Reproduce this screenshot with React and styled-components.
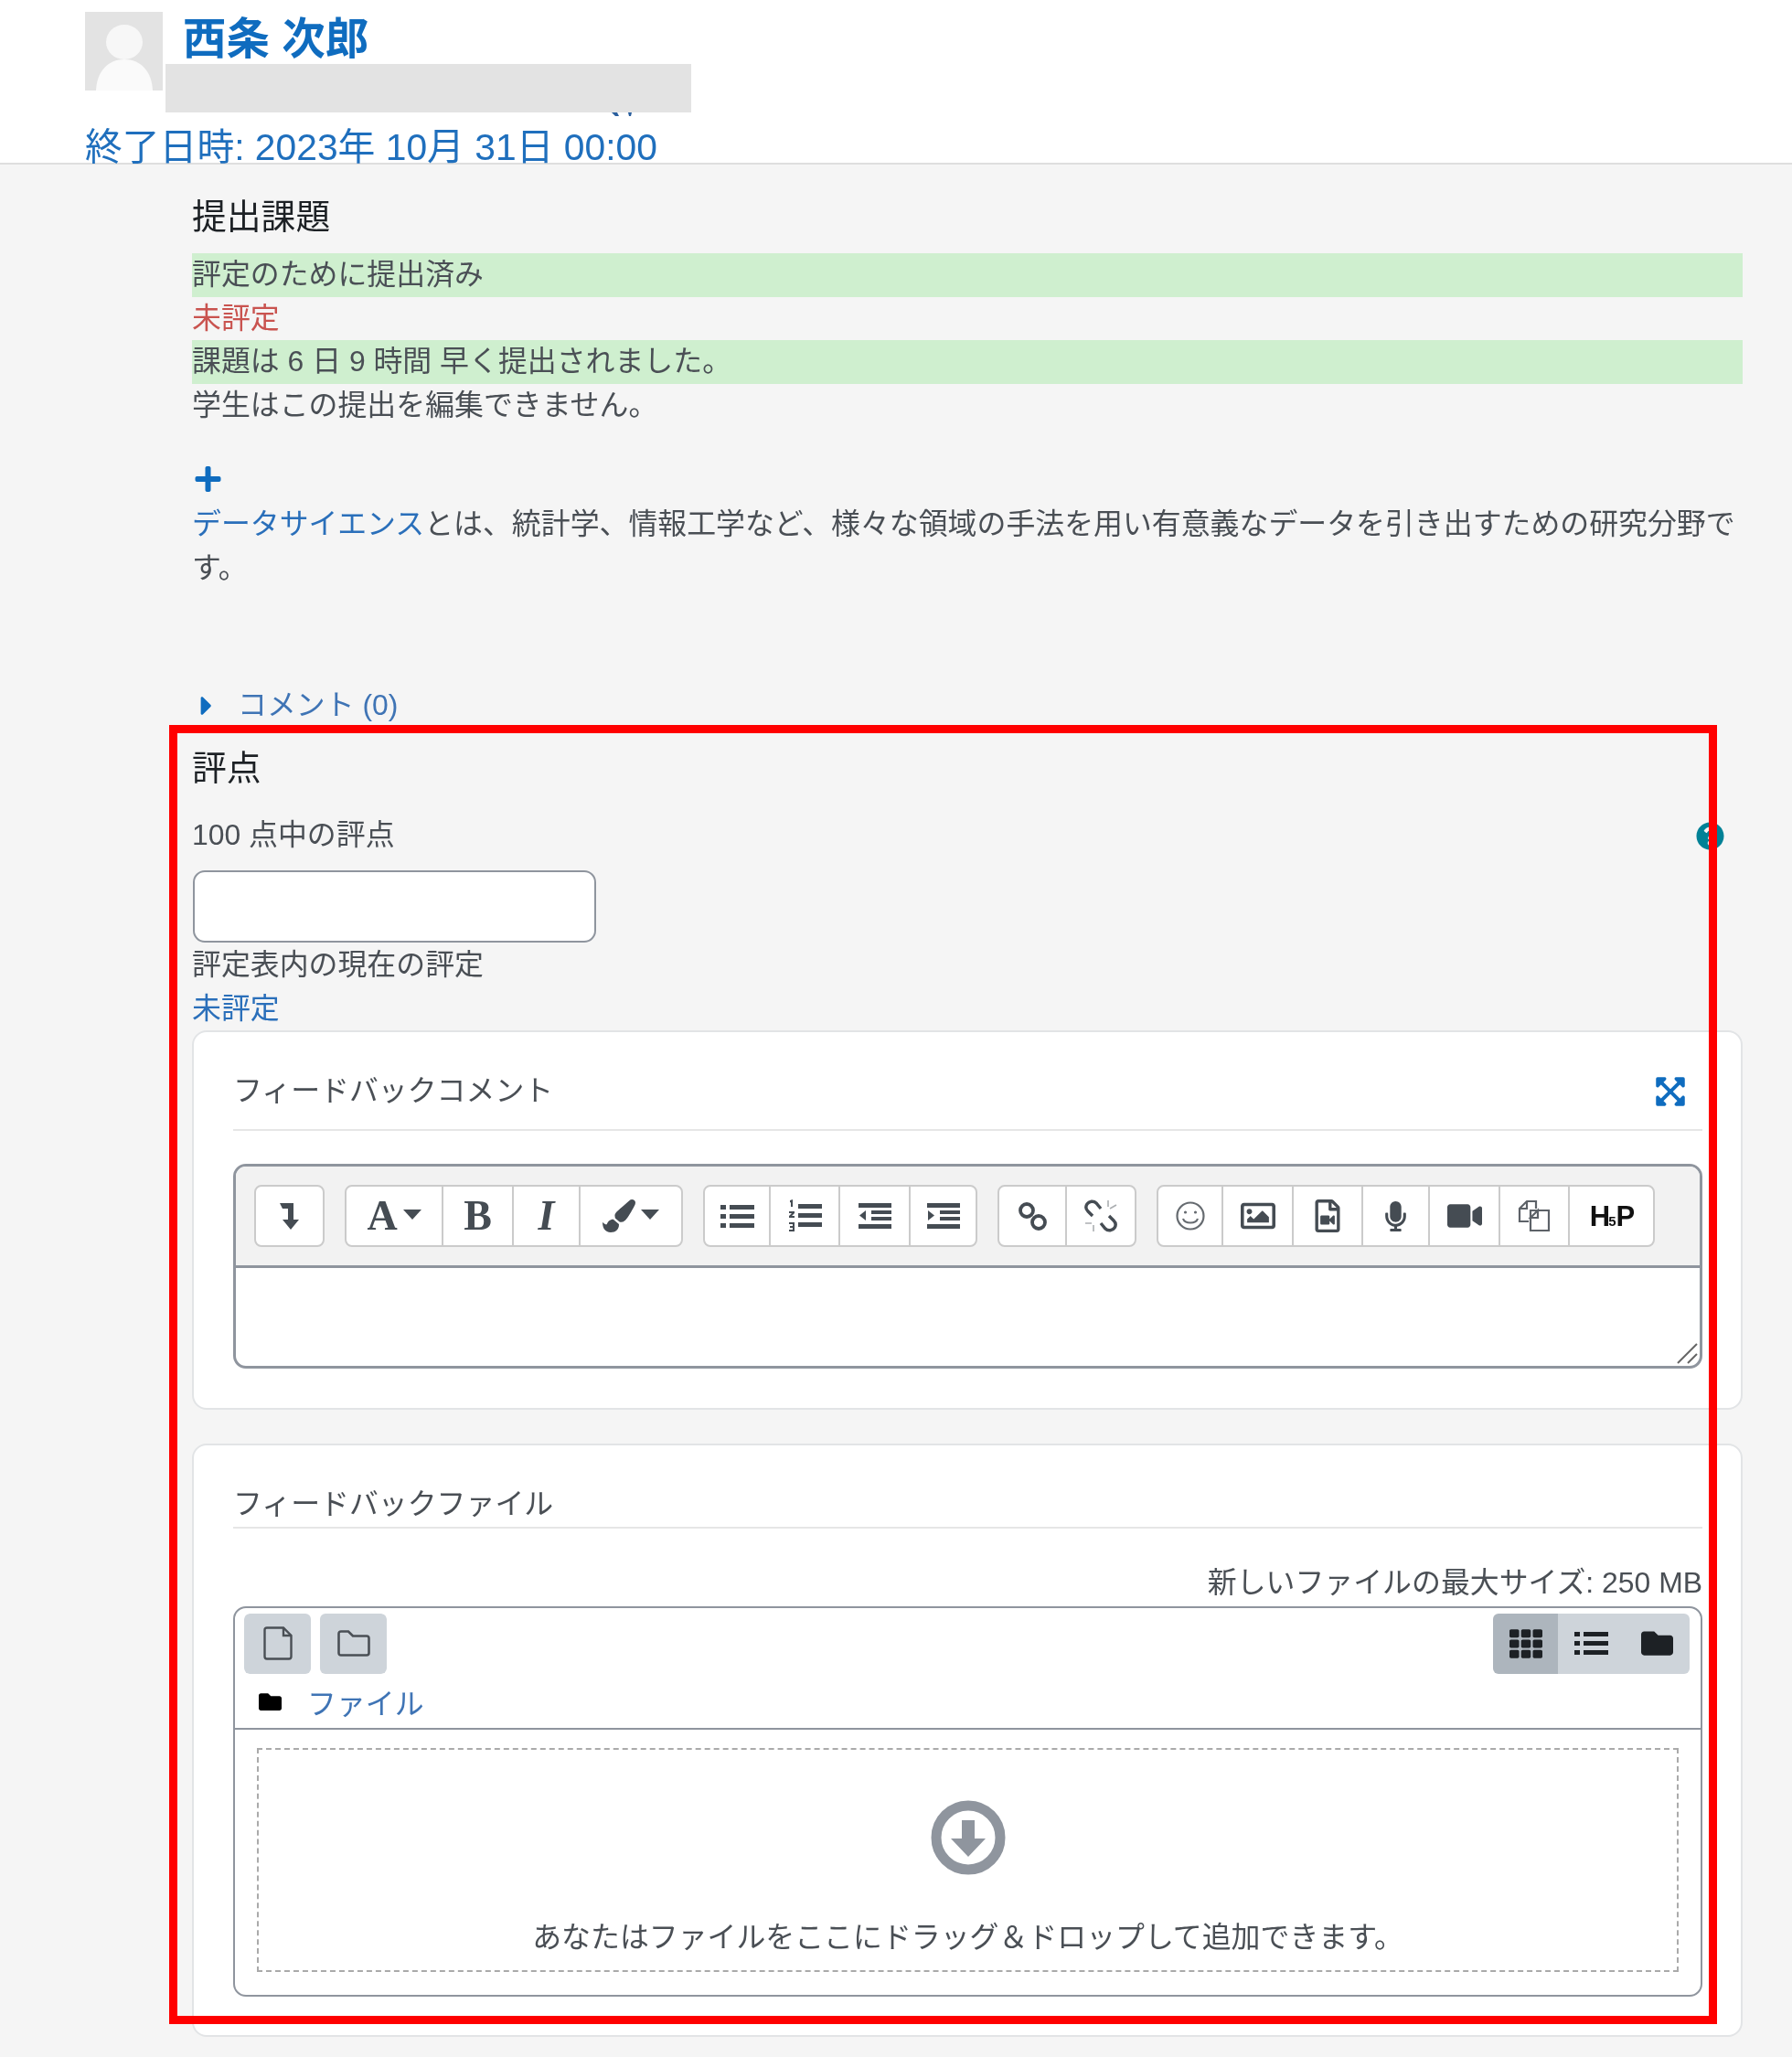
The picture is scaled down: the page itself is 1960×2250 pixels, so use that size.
import styled, { createGlobalStyle } from "styled-components";
import {
  FaPaintBrush,
  FaRegImage,
  FaRegFileVideo,
  FaMicrophone,
  FaVideo,
  FaTh,
  FaFolder,
  FaPlus,
  FaCaretRight,
  FaExpandArrowsAlt,
  FaQuestionCircle,
} from "react-icons/fa";

const GlobalStyle = createGlobalStyle`
  html, body {
    margin: 0;
    background: #f5f5f5;
  }
  body {
    font-family: "Liberation Sans", "Noto Sans CJK JP", sans-serif;
    font-size: 31.9px;
    line-height: 47.5px;
    color: #4a4f55;
  }
  * {
    box-sizing: border-box;
  }
`;

const Page = styled.div`
  position: relative;
  width: 1960px;
  height: 2250px;
  overflow: hidden;
`;

const Soft = styled.div`
  filter: blur(0.7px);
`;

// the red rectangle drawn over the screenshot
const RedFrame = styled.div`
  position: absolute;
  left: 185px;
  top: 793px;
  width: 1693px;
  height: 1421px;
  border: 9px solid #ff0000;
  pointer-events: none;
`;

const Header = styled.header`
  height: 180px;
  padding: 13px 0 0 93px;
  background: #fff;
  border-bottom: 2px solid #dedede;
`;

const UserRow = styled.div`
  display: flex;
  height: 114px;
`;

const Avatar = styled.svg`
  width: 85px;
  height: 86px;
  flex: none;
`;

const UserInfo = styled.div`
  margin-left: 3px;
`;

const UserName = styled.div`
  height: 57px;
  margin-left: 19px;
  padding-top: 7px;
  font-size: 47.5px;
  line-height: 46px;
  font-weight: 700;
  color: #0f6cbf;
`;

const Redacted = styled.div`
  width: 575px;
  height: 53px;
  background: #e3e3e3;
`;

const Clipped = styled.svg`
  display: block;
  margin-left: 486px;
  width: 26px;
  height: 4px;
`;

const DueDate = styled.div`
  margin-top: 14px;
  font-size: 40.8px;
  line-height: 40px;
  color: #1f6fbd;
`;

const Main = styled.main`
  padding: 35px 54px 0 210px;
`;

const Heading = styled.h3`
  margin: ${(p) => p.$margin};
  font-size: 37.8px;
  line-height: 45px;
  font-weight: 400;
  color: #1d2125;
`;

const StatusRow = styled.div`
  height: 47.5px;
  background: ${(p) => (p.$ok ? "#cfefcf" : "transparent")};
  color: ${(p) => p.$color || "inherit"};
`;

const PlusIcon = styled(FaPlus)`
  display: block;
  width: 29px;
  height: 32px;
  margin: 41px 0 10px 3px;
  color: #0f6cbf;
`;

const Paragraph = styled.p`
  margin: 0;
`;

const Link = styled.span`
  color: #2a6fba;
`;

const CommentRow = styled.div`
  display: flex;
  align-items: center;
  height: 47.5px;
  margin-top: 103px;
  color: #3f74b5;
`;

const CommentCaret = styled(FaCaretRight)`
  width: 14px;
  height: 34px;
  margin: 0 27px 0 9px;
  color: #0f6cbf;
`;

const HelpIcon = styled(FaQuestionCircle)`
  position: absolute;
  left: 1855px;
  top: 899px;
  width: 31px;
  height: 31px;
  color: #008196;
`;

const GradeInput = styled.div`
  width: 441px;
  height: 79px;
  margin: 15px 0 1px 1px;
  background: #fff;
  border: 2.5px solid #8f959e;
  border-radius: 13px;
`;

const Card = styled.section`
  margin-top: ${(p) => p.$top}px;
  padding: 41px 42px ${(p) => p.$bottom}px 43px;
  background: #fff;
  border: 2px solid #e2e4e6;
  border-radius: 16px;
`;

const CardTitle = styled.div`
  display: flex;
  justify-content: space-between;
  height: ${(p) => p.$height}px;
  border-bottom: 2px solid #e6e6e6;
`;

const ExpandIcon = styled(FaExpandArrowsAlt)`
  width: 36px;
  height: 36px;
  margin: 6px 17px 0 0;
  color: #0f6cbf;
`;

const Editor = styled.div`
  position: relative;
  height: 224px;
  margin-top: 36px;
  background: #fff;
  border: 3px solid #8f959e;
  border-radius: 14px;
  overflow: hidden;
`;

const Toolbar = styled.div`
  display: flex;
  gap: 22px;
  padding: 20px 18px 20px 20px;
  background: #f2f2f2;
  border-bottom: 3px solid #8f959e;
`;

const ToolGroup = styled.div`
  display: flex;
  height: 68px;
  background: #fff;
  border: 2px solid #cbcbcb;
  border-radius: 8px;
  overflow: hidden;
`;

const ToolButton = styled.div`
  display: flex;
  align-items: center;
  justify-content: center;
  gap: 6px;
  width: ${(p) => p.$w}px;
  color: #454c53;
  & + & {
    border-left: 2px solid #cbcbcb;
  }
`;

const Glyph = styled.span`
  font-family: "Liberation Serif", serif;
  font-size: 46px;
  line-height: 46px;
  font-weight: 700;
  font-style: ${(p) => (p.$italic ? "italic" : "normal")};
`;

const Caret = styled.span`
  width: 0;
  height: 0;
  margin-top: -4px;
  border-left: 10px solid transparent;
  border-right: 10px solid transparent;
  border-top: 11px solid #454c53;
`;

const H5p = styled.span`
  margin-top: 6px;
  font-size: 31px;
  line-height: 31px;
  font-weight: 700;
  letter-spacing: -2px;
  color: #111;
`;

const H5pFive = styled.span`
  font-size: 15px;
  letter-spacing: 0;
`;

const Grip = styled.svg`
  position: absolute;
  right: 2px;
  bottom: 2px;
  width: 24px;
  height: 24px;
`;

const MaxSize = styled.div`
  margin-top: 36px;
  text-align: right;
`;

const FileBox = styled.div`
  height: 427px;
  margin-top: 1px;
  border: 2.5px solid #8f959e;
  border-radius: 14px;
`;

const FileHead = styled.div`
  height: 133px;
  padding: 6px 12px 0 10px;
  border-bottom: 2.5px solid #8f959e;
`;

const FileTools = styled.div`
  display: flex;
  justify-content: space-between;
`;

const ButtonRow = styled.div`
  display: flex;
  gap: ${(p) => p.$gap}px;
  border-radius: 6px;
  overflow: hidden;
`;

const FileButton = styled.div`
  display: flex;
  align-items: center;
  justify-content: center;
  width: ${(p) => p.$w}px;
  height: 66px;
  background: ${(p) => (p.$active ? "#adb5bd" : "#ced4da")};
  border-radius: ${(p) => (p.$square ? 0 : 6)}px;
  color: #1d2125;
`;

const PathRow = styled.div`
  display: flex;
  align-items: center;
  height: 47px;
  margin: 11px 0 0 16px;
  color: #3f74b5;
`;

const PathFolder = styled(FaFolder)`
  width: 25px;
  height: 25px;
  margin: -8px 28px 0 0;
  color: #000;
`;

const DropZone = styled.div`
  display: flex;
  flex-direction: column;
  align-items: center;
  height: 245px;
  margin: 20px 24px;
  padding-top: 55px;
  border: 2.5px dashed #aaaaaa;
`;

const DropIcon = styled.svg`
  width: 82px;
  height: 82px;
  margin-bottom: 45px;
`;

// three thick lines with square bullets, used in the editor and the file picker
const ListIcon = ({ width = 37, height = 27 }) => (
  <svg width={width} height={height} viewBox="0 0 37 27" fill="currentColor">
    <rect x="0" y="1" width="6" height="5" />
    <rect x="0" y="11" width="6" height="5" />
    <rect x="0" y="21" width="6" height="5" />
    <rect x="10" y="1" width="27" height="5" />
    <rect x="10" y="11" width="27" height="5" />
    <rect x="10" y="21" width="27" height="5" />
  </svg>
);

const NumberedIcon = () => (
  <svg width="37" height="36" viewBox="0 0 37 36" fill="currentColor">
    <path d="M2 1 5 0V8H3V3L2 3.5ZM1 13H7V15L4 18H7V20H1V18L4 15H1ZM1 25H7V35H1V33H5V31H2V29H5V27H1Z" />
    <rect x="11" y="5" width="26" height="5" />
    <rect x="11" y="15" width="26" height="5" />
    <rect x="11" y="25" width="26" height="5" />
  </svg>
);

const IndentIcon = ({ out }) => (
  <svg width="36" height="29" viewBox="0 0 36 29" fill="currentColor">
    <rect x="0" y="0" width="36" height="5" />
    <rect x="14" y="8" width="22" height="4" />
    <rect x="14" y="15" width="22" height="4" />
    <rect x="0" y="23" width="36" height="5" />
    <path d={out ? "M8 8V19L1 13.5Z" : "M1 8V19L8 13.5Z"} />
  </svg>
);

const LinkIcon = () => (
  <svg width="33" height="33" viewBox="0 0 33 33" fill="none" stroke="currentColor" strokeWidth="3.8">
    <circle cx="10" cy="10" r="7" />
    <circle cx="23" cy="23" r="7" />
  </svg>
);

const UnlinkIcon = () => (
  <svg width="36" height="36" viewBox="0 0 36 36" fill="none" stroke="currentColor" strokeWidth="3.4">
    <path d="M18 10 13 4C10 1 5 2 3 5 1 8 2 11 4 13L9 18" />
    <path d="M18 26 23 32C26 35 31 34 33 31 35 28 34 25 32 23L27 18" />
    <path d="M26 1V8M35 6 28 10M1 26H8M10 35V28" strokeWidth="1.6" opacity="0.45" />
  </svg>
);

const SmileIcon = () => (
  <svg width="32" height="32" viewBox="0 0 32 32" fill="none" stroke="#666b70" strokeWidth="2.2">
    <circle cx="16" cy="16" r="14.5" />
    <circle cx="10.5" cy="12" r="1.6" fill="#666b70" stroke="none" />
    <circle cx="21.5" cy="12" r="1.6" fill="#666b70" stroke="none" />
    <path d="M8 19C10 25 22 25 24 19" />
  </svg>
);

const ManageIcon = () => (
  <svg width="36" height="36" viewBox="0 0 36 36" fill="none" stroke="#5d6268" strokeWidth="2.2">
    <path d="M12 24H2V10L10 2H20V10" />
    <path d="M2 10H10V2" />
    <path d="M14 12H34V34H14Z" />
    <path d="M14 20 22 12V20Z" />
  </svg>
);

const FileIcon = () => (
  <svg width="32" height="37" viewBox="0 0 32 37" fill="none" stroke="#4a4f55" strokeWidth="2.4">
    <path d="M22 1.5H4Q1.5 1.5 1.5 4V33Q1.5 35.5 4 35.5H28Q30.5 35.5 30.5 33V10Z" />
    <path d="M22 1.5V10H30.5" />
  </svg>
);

const FolderIcon = () => (
  <svg width="36" height="29" viewBox="0 0 36 29" fill="none" stroke="#4a4f55" strokeWidth="2.6">
    <path d="M1.5 4Q1.5 1.5 4 1.5H12L17 6.5H32Q34.5 6.5 34.5 9V25Q34.5 27.5 32 27.5H4Q1.5 27.5 1.5 25Z" />
  </svg>
);

const toolGroups = [
  [
    {
      w: 73,
      icon: (
        <svg width="22" height="29" viewBox="0 0 22 29">
          <path d="M0 0H15V18H21L12 29 3 18H9V6H3Z" fill="currentColor" />
        </svg>
      ),
    },
  ],
  [
    { w: 104, icon: <><Glyph>A</Glyph><Caret /></> },
    { w: 77, icon: <Glyph>B</Glyph> },
    { w: 73, icon: <Glyph $italic>I</Glyph> },
    { w: 112, icon: <><FaPaintBrush size={36} /><Caret /></> },
  ],
  [
    { w: 70, icon: <ListIcon /> },
    { w: 76, icon: <NumberedIcon /> },
    { w: 77, icon: <IndentIcon out /> },
    { w: 73, icon: <IndentIcon /> },
  ],
  [
    { w: 72, icon: <LinkIcon /> },
    { w: 76, icon: <UnlinkIcon /> },
  ],
  [
    { w: 69, icon: <SmileIcon /> },
    { w: 77, icon: <FaRegImage size={38} /> },
    { w: 76, icon: <FaRegFileVideo size={36} /> },
    { w: 73, icon: <FaMicrophone size={33} /> },
    { w: 77, icon: <FaVideo size={38} /> },
    { w: 76, icon: <ManageIcon /> },
    { w: 93, icon: <H5p>H<H5pFive>5</H5pFive>P</H5p> },
  ],
];

const App = () => {
  return (
    <Page>
      <GlobalStyle />
      <Soft>
        <Header>
          <UserRow>
            <Avatar viewBox="0 0 85 86">
              <rect width="85" height="86" fill="#e3e3e3" />
              <ellipse cx="43" cy="33" rx="20" ry="19" fill="#f7f7f7" />
              <path d="M12 86C13 65 25 52 43 52S73 65 74 86Z" fill="#fafafa" />
            </Avatar>
            <UserInfo>
              <UserName>西条 次郎</UserName>
              <Redacted />
              <Clipped viewBox="0 0 26 4">
                <path d="M2 0 6 4H10L8 0ZM20 0H24L23 4H21Z" fill="#2a5f9e" />
              </Clipped>
            </UserInfo>
          </UserRow>
          <DueDate>終了日時: 2023年 10月 31日 00:00</DueDate>
        </Header>

        <Main>
          <Heading $margin="0 0 17px">提出課題</Heading>
          <StatusRow $ok>評定のために提出済み</StatusRow>
          <StatusRow $color="#c9534f">未評定</StatusRow>
          <StatusRow $ok>課題は 6 日 9 時間 早く提出されました。</StatusRow>
          <StatusRow>学生はこの提出を編集できません。</StatusRow>

          <PlusIcon />
          <Paragraph>
            <Link>データサイエンス</Link>
            とは、統計学、情報工学など、様々な領域の手法を用い有意義なデータを引き出すための研究分野です。
          </Paragraph>

          <CommentRow>
            <CommentCaret />
            コメント (0)
          </CommentRow>

          <Heading $margin="22px 0 27px">評点</Heading>
          <div>100 点中の評点</div>
          <HelpIcon />
          <GradeInput />
          <div>評定表内の現在の評定</div>
          <Link>未評定</Link>

          <Card $top={0} $bottom={43}>
            <CardTitle $height={67}>
              フィードバックコメント
              <ExpandIcon />
            </CardTitle>
            <Editor>
              <Toolbar>
                {toolGroups.map((group, i) => (
                  <ToolGroup key={i}>
                    {group.map((tool, j) => (
                      <ToolButton key={j} $w={tool.w}>
                        {tool.icon}
                      </ToolButton>
                    ))}
                  </ToolGroup>
                ))}
              </Toolbar>
              <Grip viewBox="0 0 24 24" fill="none" stroke="#666" strokeWidth="2">
                <path d="M2 23 23 2M13 23 23 13" />
              </Grip>
            </Editor>
          </Card>

          <Card $top={37} $bottom={42}>
            <CardTitle $height={50}>フィードバックファイル</CardTitle>
            <MaxSize>新しいファイルの最大サイズ: 250 MB</MaxSize>
            <FileBox>
              <FileHead>
                <FileTools>
                  <ButtonRow $gap={10}>
                    <FileButton $w={73}>
                      <FileIcon />
                    </FileButton>
                    <FileButton $w={73}>
                      <FolderIcon />
                    </FileButton>
                  </ButtonRow>
                  <ButtonRow $gap={0}>
                    <FileButton $w={71} $square $active>
                      <FaTh size={36} />
                    </FileButton>
                    <FileButton $w={72} $square>
                      <ListIcon />
                    </FileButton>
                    <FileButton $w={72} $square>
                      <FaFolder size={35} />
                    </FileButton>
                  </ButtonRow>
                </FileTools>
                <PathRow>
                  <PathFolder />
                  ファイル
                </PathRow>
              </FileHead>
              <DropZone>
                <DropIcon viewBox="0 0 82 82">
                  <circle cx="41" cy="41" r="35" fill="#fff" stroke="#8f959e" strokeWidth="11" />
                  <path d="M34 22H48V42H60L41 62 22 42H34Z" fill="#8f959e" />
                </DropIcon>
                あなたはファイルをここにドラッグ＆ドロップして追加できます。
              </DropZone>
            </FileBox>
          </Card>
        </Main>
      </Soft>
      <RedFrame />
    </Page>
  );
};

export default App;
